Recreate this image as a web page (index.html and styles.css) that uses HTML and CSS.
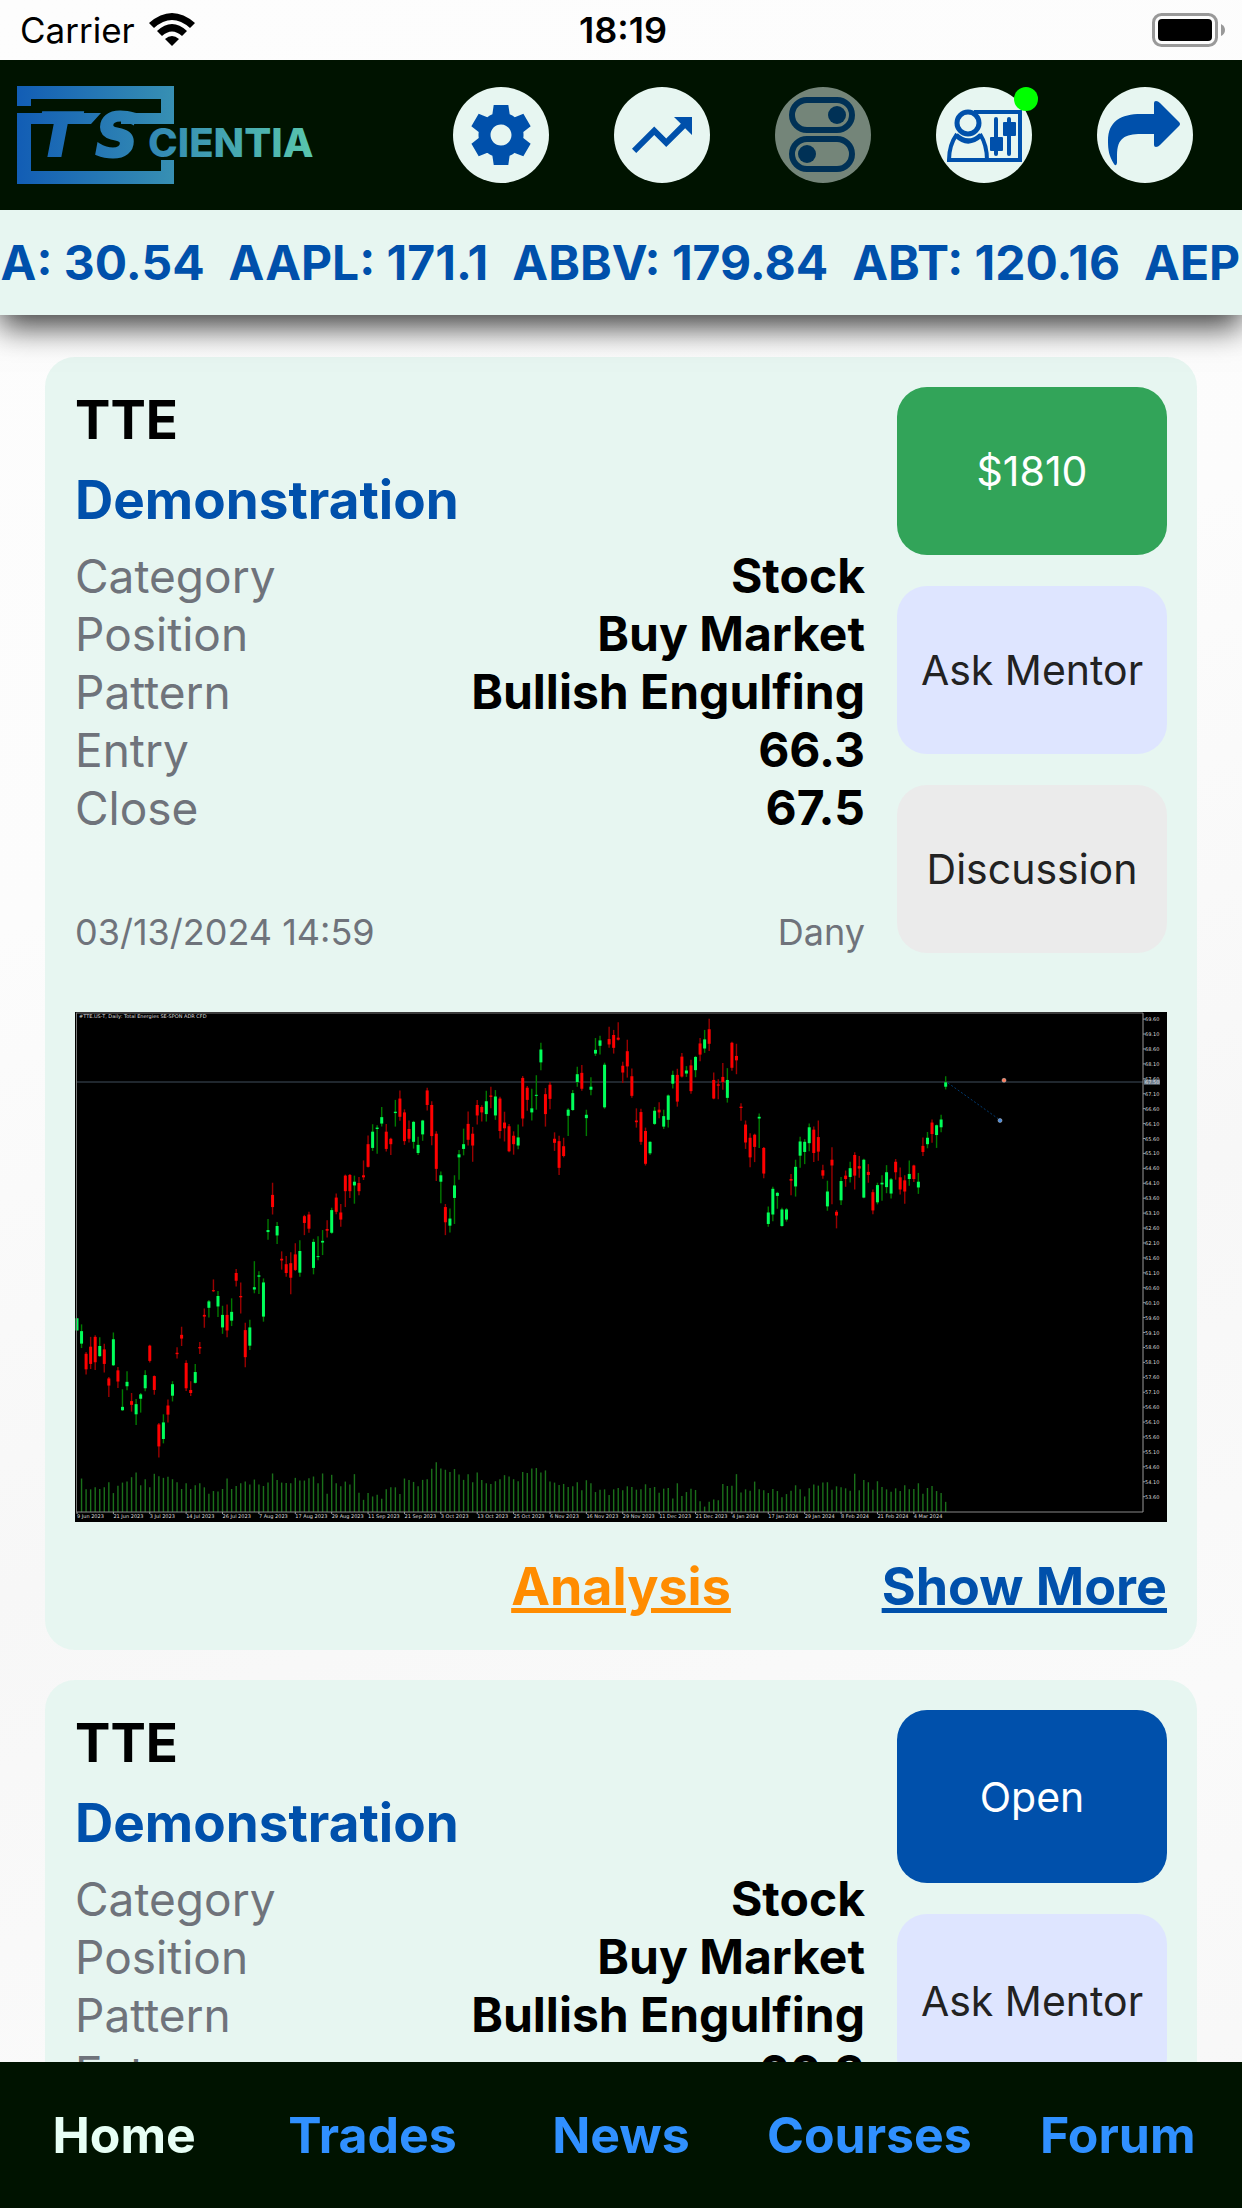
FILE: index.html
```
<!DOCTYPE html>
<html lang="en">

<head>
    <meta charset="UTF-8">
    <meta name="viewport" content="width=device-width, initial-scale=1.0">
    <title>TScientia</title>
    <link rel="stylesheet" href="styles.css">
</head>

<body>
    <div class="status-bar">
        <div class="carrier">
            <span>Carrier</span>
            <svg class="wifi" viewBox="0 0 46 34" aria-hidden="true">
                <path d="M0 10Q23 -10 46 10L41 15Q23 -1 5 15Z" />
                <path d="M8 18Q23 4 38 18L33 23Q23 14 13 23Z" />
                <path d="M16 26Q23 20 30 26L23 33Z" />
            </svg>
        </div>
        <span class="time">18:19</span>
        <svg class="battery" viewBox="0 0 74 34" aria-hidden="true">
            <rect x="1.5" y="1.5" width="63" height="31" rx="8" fill="none" stroke="#999" stroke-width="3" />
            <rect x="6" y="6" width="54" height="22" rx="4" />
            <path d="M69 11Q73 13 73 17Q73 21 69 23Z" fill="#999" />
        </svg>
    </div>

    <header class="header">
        <svg class="logo" viewBox="0 0 300 100" role="img" aria-label="TScientia">
            <defs>
                <linearGradient id="logo-fill" gradientUnits="userSpaceOnUse" x1="0" y1="0" x2="296" y2="0">
                    <stop offset="0" stop-color="#125db5" />
                    <stop offset="0.5" stop-color="#358db3" />
                    <stop offset="1" stop-color="#59c6ad" />
                </linearGradient>
            </defs>
            <g fill="url(#logo-fill)">
                <path d="M0 1H157V39H104V28H144V14H14V21H0Z" />
                <path d="M0 28H84L74 39H14V86H144V75H157V99H0Z" />
                <text class="logo-big" x="22" y="71">T</text>
                <text class="logo-big" x="79" y="71">S</text>
                <text class="logo-small" x="131" y="72">CIENTIA</text>
            </g>
        </svg>
        <div class="tools">
            <button class="tool" type="button" aria-label="Settings">
                <svg viewBox="-4 -4 32 32">
                    <path d="M19.44 12.99l-.01.02c.04-.33.08-.67.08-1.01 0-.34-.03-.66-.07-.99l.01.02 2.44-1.92-2.43-4.22-2.87 1.16.01.01c-.52-.4-1.09-.74-1.71-1h.01L14.44 2H9.57l-.44 3.07h.01c-.62.26-1.19.6-1.71 1l.01-.01-2.88-1.17-2.44 4.22 2.44 1.92.01-.02c-.04.33-.07.65-.07.99 0 .34.03.68.08 1.01l-.01-.02-2.1 1.65-.33.26 2.43 4.2 2.88-1.15-.02-.04c.53.41 1.1.75 1.73 1.01h-.03L9.58 22h4.85s.03-.18.06-.42l.38-2.65h-.01c.62-.26 1.2-.6 1.73-1.01l-.02.04 2.88 1.15 2.43-4.2s-.14-.12-.33-.26l-2.11-1.66zM12 15.5c-1.93 0-3.5-1.57-3.5-3.5s1.57-3.5 3.5-3.5 3.5 1.57 3.5 3.5-1.57 3.5-3.5 3.5z" />
                </svg>
            </button>
            <button class="tool" type="button" aria-label="Trends">
                <svg viewBox="-4 -4 32 32">
                    <path d="M16 6l2.29 2.29-4.88 4.88-4-4L2 16.59 3.41 18l6-6 4 4 6.3-6.29L22 12V6z" />
                </svg>
            </button>
            <button class="tool off" type="button" aria-label="Filters">
                <svg viewBox="0 0 96 96">
                    <g fill="none" stroke="#0050ab" stroke-width="6">
                        <rect x="17" y="13" width="60" height="30" rx="15" />
                        <rect x="17" y="52" width="60" height="30" rx="15" />
                    </g>
                    <circle cx="62" cy="28" r="9" />
                    <circle cx="32" cy="67" r="9" />
                </svg>
            </button>
            <button class="tool" type="button" aria-label="Mentor">
                <svg viewBox="0 0 96 96">
                    <g fill="none" stroke="#0050ab" stroke-width="4">
                        <path d="M38 25H84V73H13Q13 58 21 47M44 47Q51 58 51 73" />
                        <path d="M20 48Q32 60 45 48" stroke-width="5" />
                        <circle cx="32" cy="36" r="11" stroke-width="5" />
                        <path d="M60 32V67M73 32V67" stroke-linecap="round" />
                    </g>
                    <rect x="54" y="50" width="13" height="14" rx="1" />
                    <rect x="67" y="35" width="13" height="14" rx="1" />
                </svg>
                <span class="dot"></span>
            </button>
            <button class="tool" type="button" aria-label="Share">
                <svg viewBox="0 0 96 96">
                    <path d="M57 27V16Q57 14 59 14Q61 14 63 16L82 35Q84 37 82 39L63 58Q61 60 59 60Q57 60 57 58V47H44C28 47 20 51 20 68V76Q19 80 17 77C12 69 11 63 11 54C11 34 24 27 44 27Z" />
                </svg>
            </button>
        </div>
    </header>

    <div class="ticker">
        <div class="ticker-row">
            <span>AA: 30.54</span>
            <span>AAPL: 171.1</span>
            <span>ABBV: 179.84</span>
            <span>ABT: 120.16</span>
            <span>AEP: 83.2</span>
        </div>
    </div>

    <main class="feed">
        <article class="card">
            <div class="trade">
                <div class="info">
                    <h2>TTE</h2>
                    <h3>Demonstration</h3>
                    <dl>
                        <div><dt>Category</dt><dd>Stock</dd></div>
                        <div><dt>Position</dt><dd>Buy Market</dd></div>
                        <div><dt>Pattern</dt><dd>Bullish Engulfing</dd></div>
                        <div><dt>Entry</dt><dd>66.3</dd></div>
                        <div><dt>Close</dt><dd>67.5</dd></div>
                    </dl>
                    <div class="meta"><span>03/13/2024 14:59</span><span>Dany</span></div>
                </div>
                <div class="actions">
                    <button class="profit" type="button">$1810</button>
                    <button class="mentor" type="button">Ask Mentor</button>
                    <button class="discussion" type="button">Discussion</button>
                </div>
            </div>
            <svg class="chart" id="chart" viewBox="0 0 1092 510" role="img" aria-label="TTE daily chart"></svg>
            <div class="links">
                <a class="analysis" href="#">Analysis</a>
                <a class="more" href="#">Show More</a>
            </div>
        </article>

        <article class="card">
            <div class="trade">
                <div class="info">
                    <h2>TTE</h2>
                    <h3>Demonstration</h3>
                    <dl>
                        <div><dt>Category</dt><dd>Stock</dd></div>
                        <div><dt>Position</dt><dd>Buy Market</dd></div>
                        <div><dt>Pattern</dt><dd>Bullish Engulfing</dd></div>
                        <div><dt>Entry</dt><dd>66.3</dd></div>
                    </dl>
                </div>
                <div class="actions tall">
                    <button class="open" type="button">Open</button>
                    <button class="mentor" type="button">Ask Mentor</button>
                    <button class="discussion" type="button">Discussion</button>
                </div>
            </div>
        </article>
    </main>

    <nav class="tabs">
        <a class="active" href="#">Home</a>
        <a href="#">Trades</a>
        <a href="#">News</a>
        <a href="#">Courses</a>
        <a href="#">Forum</a>
    </nav>

    <script src="chart.js"></script>
</body>

</html>
```
FILE: styles.css
```
* {
    box-sizing: border-box;
}

body {
    margin: 0;
    height: 100vh;
    display: flex;
    flex-direction: column;
    overflow: hidden;
    font-family: Inter, 'Liberation Sans', sans-serif;
    color: #000;
    background: linear-gradient(160deg, #fdfdfd 0%, #fcfcfc 35%, #f7f7f7 60%, #fafafa 80%, #f7f7f7 100%);
}

h2,
h3,
dl,
dd {
    margin: 0;
}

button {
    border: none;
    padding: 0;
    font-family: inherit;
    cursor: pointer;
}

/* Status bar */
.status-bar {
    height: 60px;
    flex: none;
    display: grid;
    grid-template-columns: 1fr auto 1fr;
    align-items: center;
    padding: 0 16px 0 20px;
    font-size: 35px;
}

.carrier {
    display: flex;
    align-items: center;
    gap: 14px;
}

.wifi {
    width: 46px;
    height: 34px;
}

.time {
    font-size: 36px;
    font-weight: 600;
}

.battery {
    width: 74px;
    height: 34px;
    justify-self: end;
}

/* Header */
.header {
    height: 150px;
    flex: none;
    display: flex;
    justify-content: space-between;
    align-items: center;
    padding: 0 49px 0 17px;
    background-color: #001300;
}

.logo {
    width: 300px;
    height: 100px;
}

.logo-big {
    font-family: 'DejaVu Sans', sans-serif;
    font-size: 58px;
    font-weight: bold;
    font-style: italic;
    stroke: url(#logo-fill);
    stroke-width: 3px;
}

.logo-small {
    font-size: 40px;
    font-weight: 800;
}

.tools {
    display: flex;
    gap: 65px;
}

.tool {
    position: relative;
    width: 96px;
    height: 96px;
    border-radius: 50%;
    background-color: #e7f6f1;
}

.tool svg {
    display: block;
    width: 96px;
    height: 96px;
    fill: #0050ab;
}

.tool.off {
    opacity: 0.5;
}

.dot {
    position: absolute;
    top: 0;
    right: -6px;
    width: 24px;
    height: 24px;
    border-radius: 50%;
    background-color: #00ff00;
}

/* Ticker */
.ticker {
    height: 105px;
    flex: none;
    display: flex;
    align-items: center;
    position: relative;
    z-index: 1;
    overflow: hidden;
    background-color: #e7f6f1;
    box-shadow: 0 12px 30px rgba(0, 0, 0, 0.75);
    clip-path: inset(0 0 -60px 0);
}

.ticker-row {
    display: flex;
    gap: 24px;
    margin-left: -36px;
    white-space: nowrap;
    font-size: 48px;
    font-weight: 700;
    color: #0050ab;
}

/* Feed */
.feed {
    flex: 1;
    min-height: 0;
    overflow: hidden;
    padding: 42px 45px 0;
}

.card {
    margin-bottom: 30px;
    padding: 30px;
    border-radius: 30px;
    background-color: #e7f6f1;
}

.trade {
    display: flex;
    gap: 32px;
}

.info {
    flex: 1;
    display: flex;
    flex-direction: column;
}

.info h2,
.info h3 {
    font-size: 53px;
    line-height: 66px;
    font-weight: 700;
}

.info h3 {
    margin: 14px 0;
    color: #0050ab;
}

.info dl div {
    display: flex;
    justify-content: space-between;
    font-size: 46px;
    line-height: 58px;
}

.info dt {
    color: #6f737b;
}

.info dd {
    font-size: 48px;
    font-weight: 700;
}

.meta {
    display: flex;
    justify-content: space-between;
    margin-top: auto;
    font-size: 36px;
    line-height: 42px;
    color: #6f737b;
}

.actions {
    width: 270px;
    display: flex;
    flex-direction: column;
    gap: 31px;
}

.actions button {
    height: 168px;
    border-radius: 30px;
    font-size: 41px;
    color: #222;
}

.actions.tall button {
    height: 173px;
}

.actions .profit {
    color: #fff;
    background-color: #32a459;
}

.actions .open {
    color: #fff;
    background-color: #0050ab;
}

.actions .mentor {
    background-color: #dee5ff;
}

.actions .discussion {
    background-color: #ebebeb;
}

/* Chart */
.chart {
    display: block;
    width: 100%;
    height: auto;
    margin-top: 59px;
    background-color: #000;
}

.chart text {
    font-family: 'DejaVu Sans', sans-serif;
    font-size: 5px;
    fill: #ddd;
}

.links {
    display: grid;
    grid-template-columns: 1fr auto 1fr;
    margin-top: 32px;
    font-size: 52px;
    line-height: 66px;
    font-weight: 700;
}

.analysis {
    grid-column: 2;
    color: #ff8c00;
}

.more {
    justify-self: end;
    color: #0050ab;
}

/* Bottom tabs */
.tabs {
    height: 146px;
    flex: none;
    display: grid;
    grid-template-columns: repeat(5, 1fr);
    align-items: center;
    text-align: center;
    font-size: 50px;
    font-weight: 700;
    background-color: #001300;
}

.tabs a {
    color: #3090ff;
    text-decoration: none;
}

.tabs .active {
    color: #e7fff5;
}
```
FILE: chart.js
```
// Each candle: direction, high, body top, body bottom, low (rows of the plot)
const candles = `
g 942 942 978 978,g 960 980 1017 1030,r 1042 1047 1093 1108,r 997 1026 1077 1092,r 992 997 1072 1095,g 998 1024 1054 1056,r 1017 1034 1077 1102,r 1116 1120 1141 1175,
g 984 1004 1081 1083,r 1086 1096 1129 1148,g 1152 1204 1214 1216,g 1099 1130 1143 1155,r 1163 1187 1198 1218,g 1181 1196 1226 1258,g 1163 1167 1180 1221,g 1096 1110 1149 1158,
r 1020 1023 1068 1073,r 1111 1113 1154 1168,r 1252 1256 1321 1354,g 1226 1250 1299 1312,r 1182 1200 1227 1250,g 1128 1137 1171 1188,r 1028 1044 1048 1061,r 967 991 1002 1024,
r 1066 1074 1149 1157,r 1128 1154 1163 1172,g 1077 1101 1133 1135,r 1012 1027 1031 1048,r 913 932 937 970,g 888 892 911 940,r 827 859 862 864,g 861 876 907 938,
g 905 932 969 988,r 901 932 978 998,g 883 923 949 965,r 796 808 831 848,r 836 876 880 928,r 955 977 1057 1087,g 946 969 1023 1036,g 773 850 857 868,
g 803 815 819 870,g 824 836 937 952,g 648 681 687 710,r 541 577 613 635,g 657 669 697 722,r 744 766 771 798,r 758 782 808 819,r 747 779 822 871,
r 720 753 799 802,g 711 743 807 819,r 636 640 660 696,r 627 635 677 689,g 707 716 793 812,g 699 758 761 770,g 681 713 718 755,r 652 678 683 703,
g 615 622 689 692,r 573 585 627 634,r 604 629 650 671,r 517 520 566 613,r 515 518 566 586,g 520 538 549 603,r 524 542 566 578,r 475 519 525 533,
r 401 427 494 496,g 368 390 438 447,g 371 378 382 455,g 317 347 366 375,r 367 390 441 449,r 408 411 427 459,g 296 331 335 375,r 268 292 346 358,
r 324 333 418 429,r 357 382 411 422,g 358 361 420 440,g 405 429 453 459,g 355 357 398 417,r 260 268 311 327,r 300 311 403 430,r 389 396 500 536,
g 508 519 538 602,r 604 613 658 696,g 617 647 668 688,g 519 549 586 663,g 444 457 466 532,g 381 427 441 460,r 330 367 414 431,r 376 396 431 479,
r 296 311 342 369,r 312 317 333 360,g 269 300 338 360,r 257 283 287 321,g 267 286 342 355,r 287 292 388 410,r 331 363 380 419,r 367 374 448 451,
r 389 402 427 458,g 369 407 431 442,r 225 231 351 375,r 255 260 296 328,g 263 321 333 357,g 223 281 284 325,g 127 147 185 208,r 261 279 338 375,
r 243 251 293 324,r 392 411 423 447,r 402 418 497 518,r 408 433 462 466,g 321 325 343 403,g 267 276 326 328,g 198 220 243 257,r 193 216 263 269,
g 325 340 350 403,g 229 257 266 282,g 113 148 159 166,g 106 120 136 162,g 186 192 318 322,r 80 116 132 142,r 89 104 142 159,r 66 112 118 120,
r 183 195 215 246,r 118 152 197 230,r 203 226 284 290,r 321 357 362 378,r 322 332 420 429,r 378 388 485 490,g 418 420 454 459,g 317 328 367 370,
r 303 325 333 350,g 325 344 375 382,g 280 283 355 378,g 210 222 248 262,r 204 222 301 316,r 157 168 227 230,g 196 209 218 228,r 177 194 270 278,
g 166 169 208 229,r 113 129 162 182,g 89 117 144 157,r 56 87 130 151,r 215 237 292 294,r 235 250 254 294,r 187 228 243 266,g 202 237 290 304,
r 124 127 201 210,r 130 166 179 220,r 306 316 320 358,r 357 369 422 441,r 395 408 466 495,r 396 399 435 480,g 336 346 351 438,r 435 438 514 528,
g 611 629 663 671,g 553 559 635 655,g 568 571 580 618,g 615 620 669 671,g 616 620 650 656,r 515 530 535 578,g 473 494 552 582,g 405 419 461 497,
g 412 420 450 486,g 366 377 424 448,r 375 384 453 480,r 357 406 449 476,r 488 504 520 529,g 535 567 611 624,r 436 473 490 605,r 622 627 638 676,
g 524 536 593 607,r 505 520 530 553,g 479 498 524 540,r 451 459 520 561,r 462 492 499 526,g 470 473 585 587,r 486 509 518 541,r 561 569 623 634,
g 541 548 599 605,g 519 541 546 594,g 489 510 554 572,g 527 531 573 588,r 471 479 510 532,r 496 525 561 576,r 519 534 567 603,g 475 515 530 550,
r 488 490 530 539,g 512 538 555 574,r 407 432 450 462,g 391 408 427 439,r 354 363 397 423,g 369 371 400 438,g 340 354 377 392,g 226 244 257 265
`.trim().split(',').map(c => c.trim().split(' '));

const volumes = [1515,
    1416, 1448, 1448, 1442, 1447, 1442, 1427, 1459, 1437, 1428, 1425, 1412, 1398, 1436, 1418, 1442,
    1402, 1409, 1414, 1411, 1418, 1427, 1447, 1430, 1447, 1436, 1430, 1442, 1461, 1453, 1454, 1447,
    1416, 1447, 1438, 1430, 1425, 1434, 1419, 1434, 1438, 1428, 1401, 1420, 1428, 1429, 1430, 1414,
    1422, 1422, 1415, 1410, 1430, 1401, 1461, 1405, 1430, 1439, 1425, 1434, 1403, 1458, 1479, 1459,
    1469, 1464, 1476, 1448, 1442, 1442, 1462, 1416, 1420, 1426, 1439, 1420, 1418, 1387, 1368, 1386,
    1390, 1397, 1388, 1404, 1420, 1403, 1427, 1398, 1420, 1430, 1432, 1424, 1418, 1406, 1410, 1418,
    1424, 1397, 1400, 1386, 1385, 1398, 1392, 1425, 1428, 1435, 1432, 1441, 1439, 1427, 1451, 1421,
    1430, 1456, 1449, 1448, 1465, 1448, 1444, 1451, 1439, 1441, 1449, 1448, 1433, 1444, 1441, 1458,
    1446, 1444, 1475, 1430, 1468, 1456, 1446, 1450, 1483, 1499, 1485, 1478, 1480, 1432, 1438, 1437,
    1403, 1457, 1448, 1452, 1425, 1448, 1451, 1459, 1447, 1453, 1471, 1462, 1452, 1436, 1448, 1469,
    1445, 1434, 1437, 1428, 1427, 1449, 1439, 1442, 1445, 1452, 1402, 1451, 1420, 1427, 1449, 1424,
    1441, 1448, 1455, 1445, 1453, 1436, 1448, 1447, 1430, 1461, 1444, 1438, 1453, 1459, 1485];

// One date label every 8 candles
const dates = ['9 Jun 2023', '21 Jun 2023', '3 Jul 2023', '14 Jul 2023', '26 Jul 2023', '7 Aug 2023',
    '17 Aug 2023', '29 Aug 2023', '11 Sep 2023', '21 Sep 2023', '3 Oct 2023', '13 Oct 2023',
    '25 Oct 2023', '6 Nov 2023', '16 Nov 2023', '29 Nov 2023', '11 Dec 2023', '21 Dec 2023',
    '4 Jan 2024', '17 Jan 2024', '29 Jan 2024', '8 Feb 2024', '21 Feb 2024', '4 Mar 2024'];

const step = 4.548;
const x = i => 2 + i * step;
const y = row => (row - 36) / 2.958;
const line = (x1, y1, x2, y2, color, width = 1) =>
    `<path d="M${x1} ${y1}L${x2} ${y2}" stroke="${color}" stroke-width="${width}"/>`;

let out = line(2, y(243), 1068, y(243), '#20272e', 2);

volumes.forEach((v, i) => {
    out += line(x(i), y(v), x(i), y(1515), '#1a701a', 1.4);
});

candles.forEach(([dir, high, top, bottom, low], i) => {
    const up = dir === 'g';
    out += line(x(i), y(high), x(i), y(low), up ? '#007a00' : '#9a0000', 1.4);
    out += line(x(i), y(top), x(i), y(bottom), up ? '#00ff5a' : '#ff0000', 3);
});

// Frame, date axis and price axis
out += line(1, 1, 1068, 1, '#777') + line(1.5, 1, 1.5, 500, '#777') + line(1, 500, 1068, 500, '#888') + line(1068, 1, 1068, 500, '#999');

dates.forEach((d, n) => {
    out += line(x(n * 8), 500, x(n * 8), 502, '#999') + `<text x="${x(n * 8)}" y="506">${d}</text>`;
});

for (let n = 0; n < 33; n++) {
    const py = y(57 + n * 44.15);
    out += line(1068, py, 1070, py, '#999') + `<text x="1070" y="${py + 2}">${(69.6 - n * 0.5).toFixed(2)}</text>`;
}

out += `<rect x="1069" y="${y(236)}" width="16" height="5" fill="#708090"/><text x="1070" y="${y(249)}">67.50</text>`;
out += `<text x="4" y="6">#TTE.US-T, Daily:  Total Energies SE-SPON ADR CFD</text>`;

// Entry and exit of the trade
out += `<path d="M873 71L925 108" stroke="#003a70" stroke-dasharray="2 2"/>`;
out += `<circle cx="929" cy="${y(238)}" r="2" fill="#ff7755" stroke="#ccc" stroke-width="0.5"/>`;
out += `<circle cx="925" cy="${y(357)}" r="2" fill="#4488dd" stroke="#ccc" stroke-width="0.5"/>`;

document.getElementById('chart').innerHTML = out;
```
